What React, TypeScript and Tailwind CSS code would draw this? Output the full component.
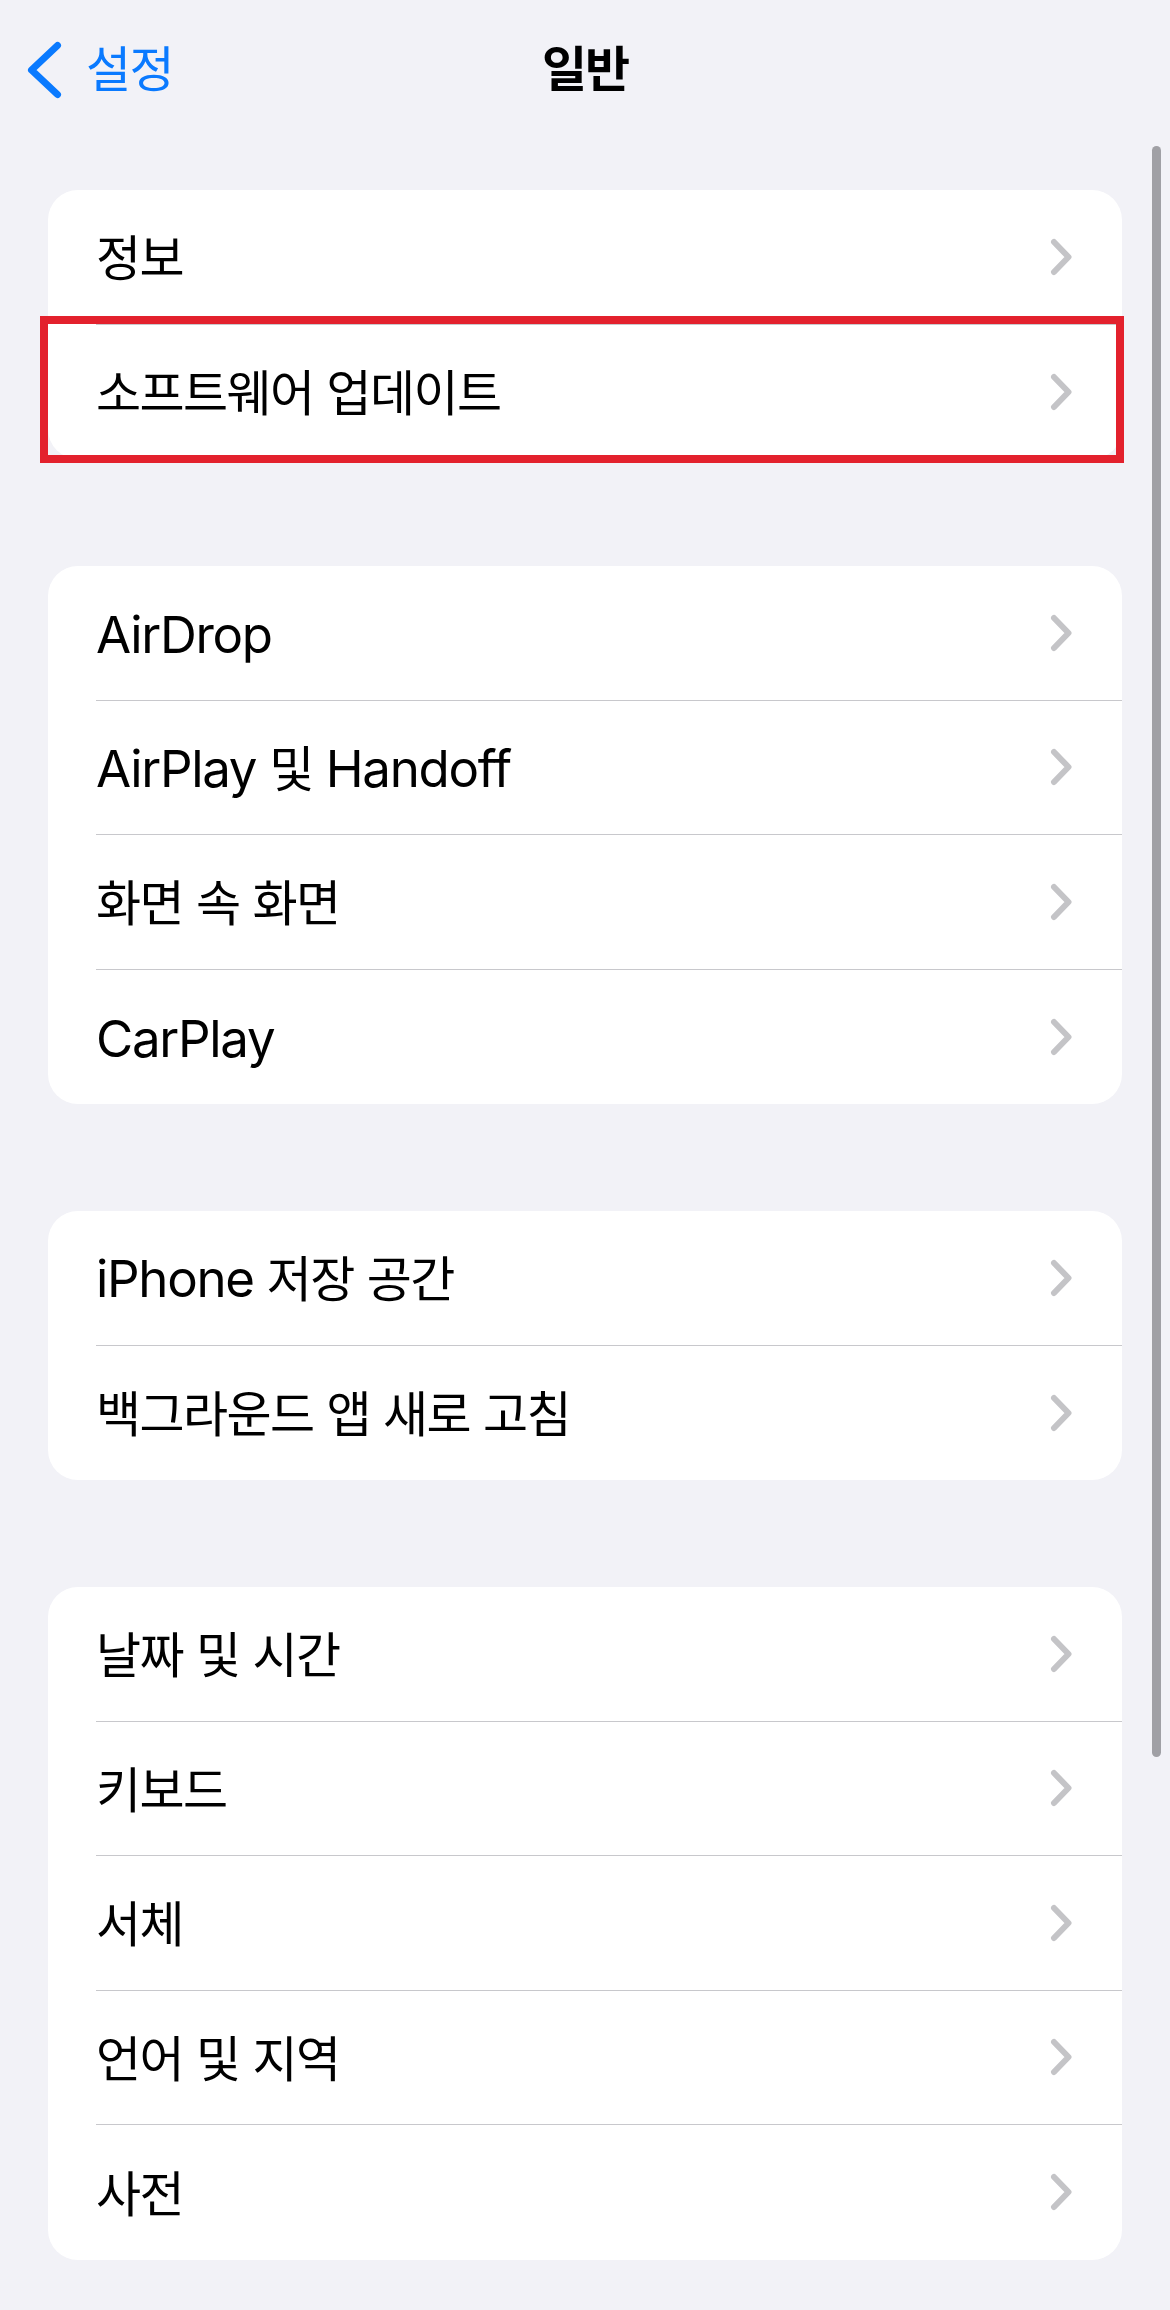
import React from 'react';

const groups: string[][] = [
  ['정보', '소프트웨어 업데이트'],
  ['AirDrop', 'AirPlay 및 Handoff', '화면 속 화면', 'CarPlay'],
  ['iPhone 저장 공간', '백그라운드 앱 새로 고침'],
  ['날짜 및 시간', '키보드', '서체', '언어 및 지역', '사전'],
];

// hangul runs get their own size/tracking so they sit closer to the system font
const Label = ({ text }: { text: string }) => {
  const parts = text.split(/([\uAC00-\uD7A3]+)/).filter(Boolean);
  return (
    <span className="mt-[4px] text-[51px] leading-[60px] tracking-[-1.3px] text-black whitespace-nowrap">
      {parts.map((p, i) =>
        /[\uAC00-\uD7A3]/.test(p) ? (
          <span key={i} className="text-[49px] tracking-[-1.6px]">{p}</span>
        ) : (
          <span key={i}>{p}</span>
        )
      )}
    </span>
  );
};

const Chevron = () => (
  <svg width="24" height="40" viewBox="0 0 24 40" className="shrink-0">
    <path d="M4 5 L18.5 20 L4 35" fill="none" stroke="#c4c4c7" strokeWidth="6" strokeLinecap="round" strokeLinejoin="round" />
  </svg>
);

const Row = ({ title, last }: { title: string; last: boolean }) => (
  <div className="flex h-[134.5px] pl-[48px]">
    <div className={`flex flex-1 items-center justify-between pr-[48px] ${last ? '' : 'border-b border-[#c8c8cc]'}`}>
      <Label text={title} />
      <Chevron />
    </div>
  </div>
);

const Group = ({ items, highlight }: { items: string[]; highlight?: boolean }) => (
  <div className="relative">
    <div className="bg-white rounded-[30px] overflow-hidden">
      {items.map((t, i) => (
        <Row key={t} title={t} last={i === items.length - 1} />
      ))}
    </div>
    {highlight && (
      <div className="absolute left-[-8px] top-[126px] w-[1084px] h-[147px] border-[8px] border-[#e3212d] pointer-events-none" />
    )}
  </div>
);

export default function App() {
  return (
    <div className="relative min-h-[2310px] bg-[#f2f2f7] font-['Inter','Noto_Sans_CJK_KR',sans-serif] overflow-hidden">
      <header className="grid grid-cols-[1fr_auto_1fr] items-center h-[140px]">
        <button className="flex items-center pl-[24px] text-[#0a7aff]">
          <svg width="40" height="62" viewBox="0 0 40 62">
            <path d="M33.5 6.5 L7.5 31 L33.5 55.5" fill="none" stroke="#0a7aff" strokeWidth="7" strokeLinecap="round" strokeLinejoin="round" />
          </svg>
          <span className="ml-[22px] text-[49px] leading-[60px] tracking-[-1.6px]">설정</span>
        </button>
        <h1 className="text-[49px] leading-[60px] font-bold tracking-[-2px] text-black">일반</h1>
        <div />
      </header>

      <main className="flex flex-col gap-[107px] px-[48px] pt-[50px] pb-[50px]">
        {groups.map((g, i) => (
          <Group key={i} items={g} highlight={i === 0} />
        ))}
      </main>

      {/* scroll indicator */}
      <div className="absolute right-[9px] top-[146px] w-[9px] h-[1611px] rounded-full bg-[#a0a0a5]" />
    </div>
  );
}
